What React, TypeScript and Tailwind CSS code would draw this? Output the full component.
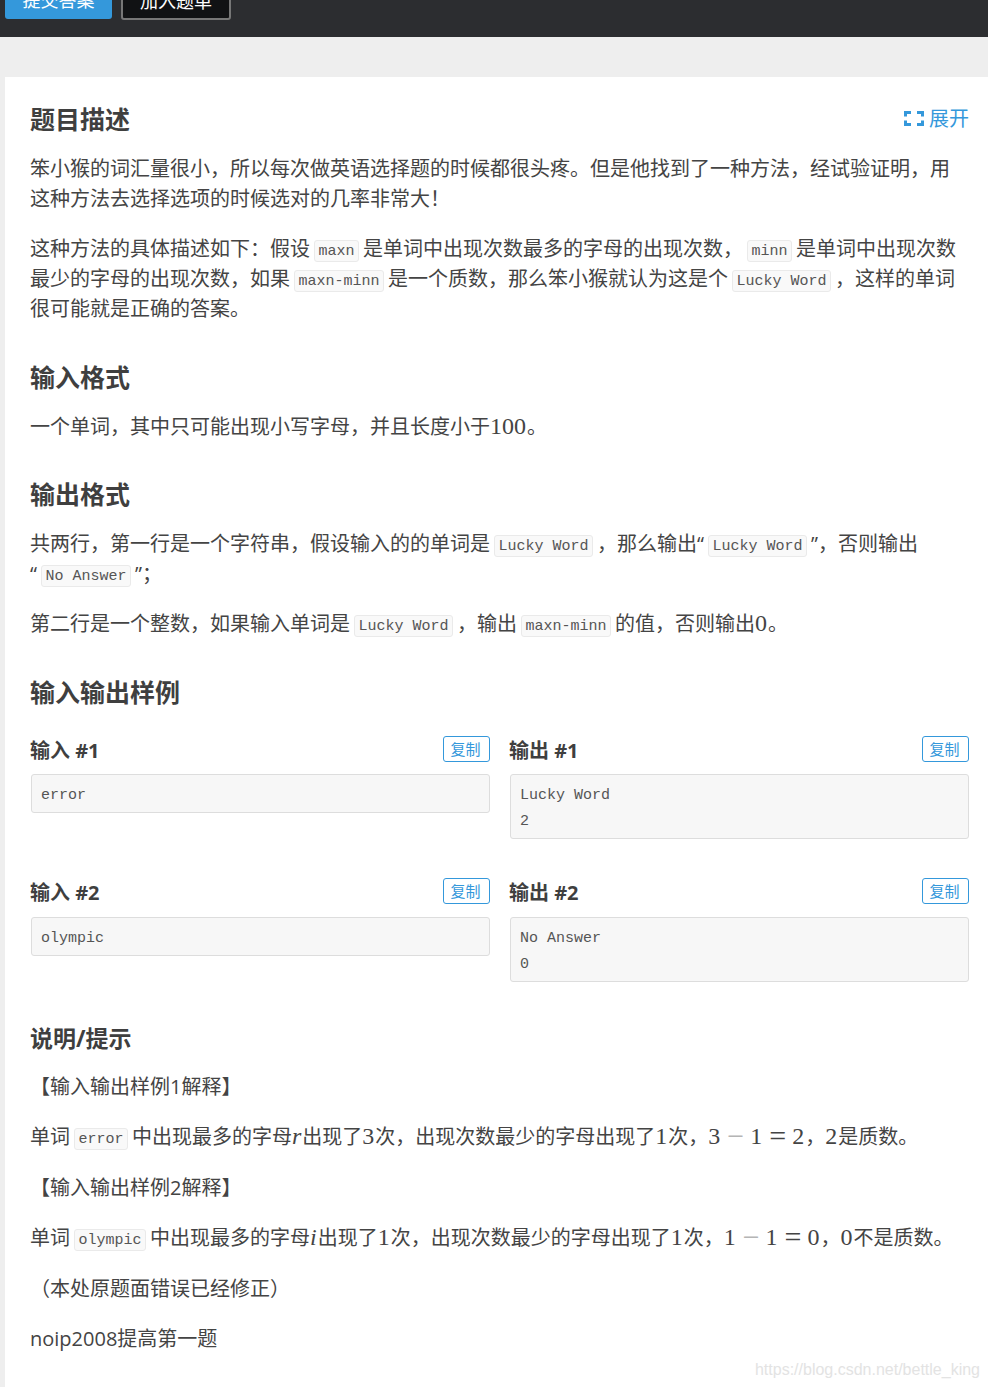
import React from "react";

const C = ({ children }: { children: React.ReactNode }) => (
  <code className="mx-[4px] inline-block h-[22px] rounded-[3px] border border-[#eaeaea] bg-[#f9f9f9] px-[3.5px] align-[1px] font-['Liberation_Mono','Noto_Sans_CJK_SC',monospace] text-[15px] leading-[21px] text-[#555]">
    {children}
  </code>
);

const M = ({ children, i }: { children: React.ReactNode; i?: boolean }) => (
  <span className={`pr-[1px] font-['Liberation_Serif',serif] text-[24px] leading-none ${i ? "italic" : ""}`}>{children}</span>
);

const Op = ({ children, minus }: { children: React.ReactNode; minus?: boolean }) => (
  <span className={`mx-[6px] align-[-2px] font-['Liberation_Serif',serif] text-[30px] leading-[0] ${minus ? "text-[#b5b5b5]" : ""}`}>{children}</span>
);

const H2 = ({ children, className = "", size = "text-[25px]" }: { children: React.ReactNode; className?: string; size?: string }) => (
  <h2 className={`h-[30px] ${size} leading-[28px] font-bold text-[#3f3f3f] ${className}`}>{children}</h2>
);

const P = ({ children, className = "" }: { children: React.ReactNode; className?: string }) => (
  <p className={`pt-[1px] text-[20px] leading-[30px] ${className}`}>{children}</p>
);

const Sample = ({ title, lines, gap }: { title: string; lines: string[]; gap: string }) => (
  <div>
    <div className="flex h-[26px] items-center justify-between">
      <h3 className="mt-[4px] -ml-[1px] text-[20px] leading-[30px] font-bold text-[#3f3f3f]">{title}</h3>
      <button className="h-[26px] w-[47px] rounded-[3px] border border-[#3498db] pr-[2px] text-[15px] leading-[22px] text-[#3498db]">复制</button>
    </div>
    <pre className={`${gap} rounded-[3px] border border-[#dddddd] bg-[#f7f7f7] px-[9px] pt-[7.5px] pb-[3.5px] font-['Liberation_Mono','Noto_Sans_CJK_SC',monospace] text-[15px] leading-[26px] text-[#555]`}>
      {lines.join("\n")}
    </pre>
  </div>
);

export default function App() {
  return (
    <div className="relative min-h-[1387px] overflow-hidden bg-[#eeeeee] font-['Open_Sans','Noto_Sans_CJK_SC',sans-serif] text-[#444]">
      <header className="flex h-[37px] items-end gap-[9px] overflow-hidden bg-[#2c2d30] pb-[17px] pl-[5px]">
        <button className="mb-[1px] h-[38px] w-[107px] shrink-0 rounded-[3px] bg-[#3498db] text-[18px] text-white">提交答案</button>
        <button className="h-[38px] w-[110px] shrink-0 rounded-[3px] border-2 border-[#777] bg-[#111214] text-[18px] text-white">加入题单</button>
      </header>

      <main className="mt-[40px] ml-[5px] bg-white pt-[28px] pr-[19px] pb-[34px] pl-[25px]">
        <div className="flex h-[30px] items-center justify-between">
          <H2>题目描述</H2>
          <a className="mb-[3px] flex items-center gap-[5px] text-[20px] leading-[30px] text-[#3498db]">
            <svg width="20" height="15" viewBox="0 0 20 15" fill="none" stroke="#3498db" strokeWidth="3">
              <path d="M7 1.5H1.5V5.5M1.5 9.5V13.5H7M13 1.5H18.5V5.5M18.5 9.5V13.5H13" />
            </svg>
            展开
          </a>
        </div>

        <P className="mt-[18px]">笨小猴的词汇量很小，所以每次做英语选择题的时候都很头疼。但是他找到了一种方法，经试验证明，用这种方法去选择选项的时候选对的几率非常大！</P>
        <P className="mt-[19px]">
          这种方法的具体描述如下：假设<C>maxn</C>是单词中出现次数最多的字母的出现次数，<C>minn</C>是单词中出现次数最少的字母的出现次数，如果<C>maxn-minn</C>是一个质数，那么笨小猴就认为这是个<C>Lucky Word</C>，这样的单词很可能就是正确的答案。
        </P>

        <H2 className="mt-[39px]">输入格式</H2>
        <P className="mt-[18px]">一个单词，其中只可能出现小写字母，并且长度小于<M>100</M>。</P>

        <H2 className="mt-[38px]">输出格式</H2>
        <P className="mt-[18px]">
          共两行，第一行是一个字符串，假设输入的的单词是<C>Lucky Word</C>，那么输出“<C>Lucky Word</C>”，否则输出
          <br />
          “<C>No Answer</C>”；
        </P>
        <P className="mt-[19px]">第二行是一个整数，如果输入单词是<C>Lucky Word</C>，输出<C>maxn-minn</C>的值，否则输出<M>0</M>。</P>

        <H2 className="mt-[39px]">输入输出样例</H2>

        <div className="mt-[28px] ml-[1px] grid grid-cols-2 gap-x-[20px] gap-y-[39px]">
          <Sample title="输入 #1" lines={["error"]} gap="mt-[12px]" />
          <Sample title="输出 #1" lines={["Lucky Word", "2"]} gap="mt-[12px]" />
          <Sample title="输入 #2" lines={["olympic"]} gap="mt-[13px]" />
          <Sample title="输出 #2" lines={["No Answer", "0"]} gap="mt-[13px]" />
        </div>

        <H2 className="mt-[42px]" size="text-[23px]">说明/提示</H2>
        <P className="mt-[17px]">【输入输出样例1解释】</P>
        <P className="mt-[19px]">
          单词<C>error</C>中出现最多的字母<M i>r</M>出现了<M>3</M>次，出现次数最少的字母出现了<M>1</M>次，<M>3</M><Op minus>−</Op><M>1</M><Op>=</Op><M>2</M>，<M>2</M>是质数。
        </P>
        <P className="mt-[20px]">【输入输出样例2解释】</P>
        <P className="mt-[19px]">
          单词<C>olympic</C>中出现最多的字母<M i>i</M>出现了<M>1</M>次，出现次数最少的字母出现了<M>1</M>次，<M>1</M><Op minus>−</Op><M>1</M><Op>=</Op><M>0</M>，<M>0</M>不是质数。
        </P>
        <P className="mt-[20px]">（本处原题面错误已经修正）</P>
        <P className="mt-[19px]">noip2008提高第一题</P>
      </main>

      <div className="absolute right-[8px] bottom-[7px] font-['Liberation_Sans',sans-serif] text-[16px] leading-[22px] text-[#e3e3e3]">
        https://blog.csdn.net/bettle_king
      </div>
    </div>
  );
}
